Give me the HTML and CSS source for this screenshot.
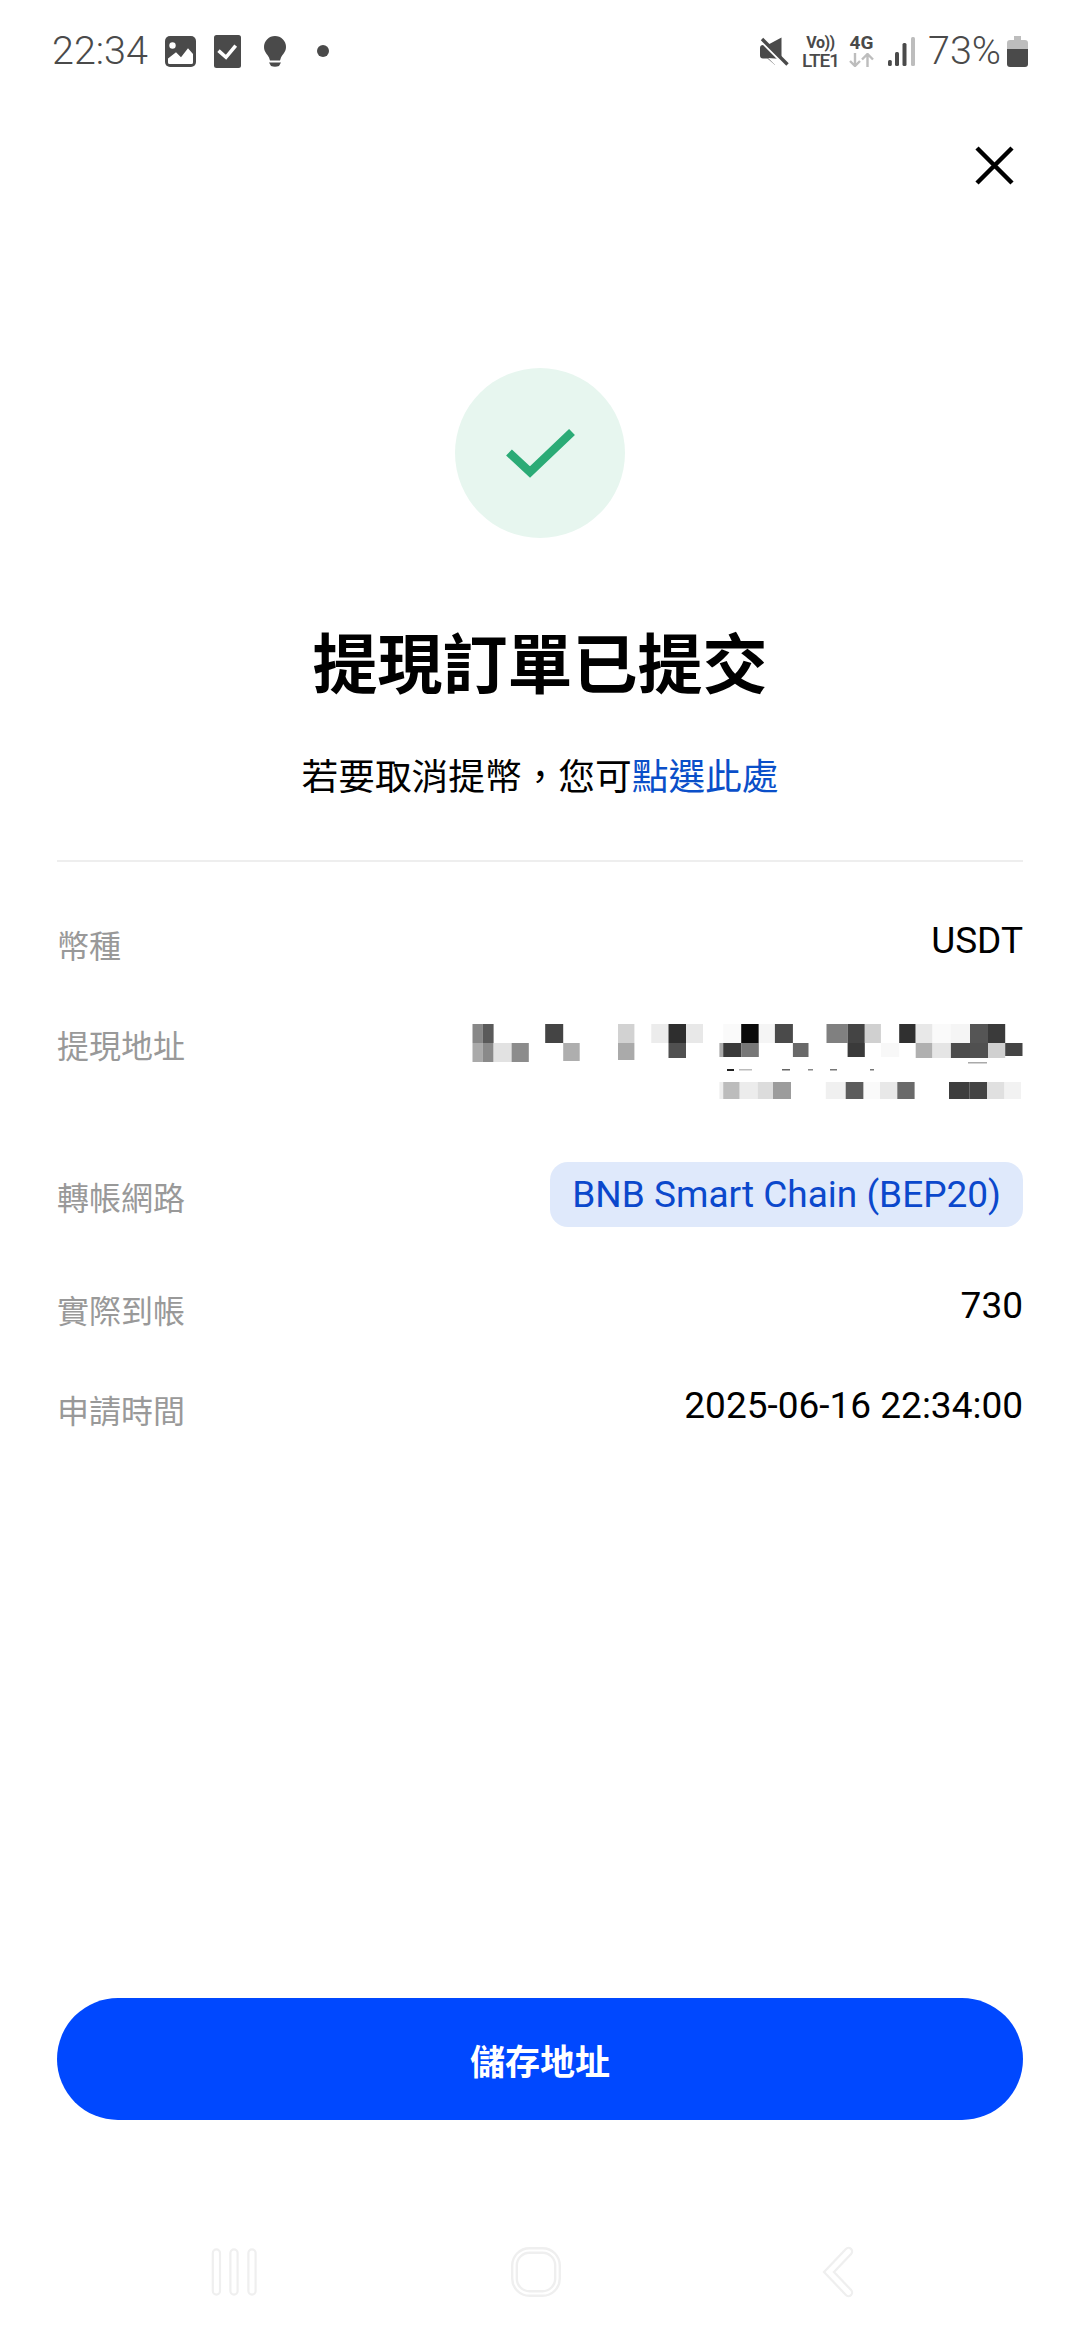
FILE: index.html
```html
<!DOCTYPE html>
<html lang="zh-Hant">
<head>
<meta charset="utf-8">
<title>提現訂單已提交</title>
<link rel="stylesheet" href="styles.css">
</head>
<body>
<main class="screen">
  <header class="status">
    <div class="status-left">
      <span class="clock">22:34</span>
      <svg class="ic-image" width="31" height="31" viewBox="0 0 31 31"><rect width="31" height="31" rx="5" fill="#4a4a4a"/><circle cx="7.5" cy="9.5" r="3.2" fill="#fff"/><path d="M3 22.5 11 16.3 16 21.3 23 12.3 28 18V26.5Q28 28 26.5 28H4.5Q3 28 3 26.5Z" fill="#fff"/></svg>
      <svg class="ic-check" width="27" height="33" viewBox="0 0 27 33"><rect width="27" height="33" rx="2.5" fill="#4a4a4a"/><path d="M4.5 15.7 12 22.3 21.7 10.7" fill="none" stroke="#fff" stroke-width="3.6"/></svg>
      <svg class="ic-bulb" width="22" height="31" viewBox="0 0 22 31"><path d="M11 0A11 11 0 0 1 22 11C22 16 18.800 18 17 21.500L16 24.500H6L5 21.500C3.200 18 0 16 0 11A11 11 0 0 1 11 0Z" fill="#4a4a4a"/><path d="M5 26.500H17L15 30Q11 31.500 7 30Z" fill="#4a4a4a"/></svg>
      <span class="dot"></span>
    </div>
    <div class="status-right">
      <svg class="ic-mute" width="29" height="29" viewBox="0 0 29 29"><path d="M0 11Q0 8 3 8H7.500L21.500 0.500V22L15 28 7.500 21.500H3Q0 21.500 0 18.500Z" fill="#4a4a4a"/><path d="M0.500 3.800 23 26.300" stroke="#fff" stroke-width="2.500"/><path d="M21.500 22V28H15L8 21Z" fill="#fff"/><path d="M2 2 27.500 27.500" stroke="#4a4a4a" stroke-width="3.400"/></svg>
      <div class="volte"><span class="vo">Vo))</span><span class="lte">LTE1</span></div>
      <div class="net">
        <span class="fourg">4G</span>
        <svg width="25" height="14" viewBox="0 0 25 14"><path d="M6 0V13M1 8 6 13 11 8M18.500 14V1M13 6.500 18.500 1 24 6.500" fill="none" stroke="#bdbdbd" stroke-width="2.400"/></svg>
      </div>
      <svg class="ic-signal" width="27" height="29" viewBox="0 0 27 29"><rect y="23" width="3.800" height="6" rx="1.500" fill="#4a4a4a"/><rect x="7" y="15" width="4" height="14" rx="1.500" fill="#4a4a4a"/><rect x="14.500" y="6" width="4" height="23" rx="1.500" fill="#4a4a4a"/><rect x="23" width="4" height="29" rx="1.500" fill="#bdbdbd"/></svg>
      <span class="pct">73%</span>
      <svg class="ic-batt" width="21" height="31" viewBox="0 0 21 31"><path d="M7 0H14V4H18Q21 4 21 7V13H0V7Q0 4 3 4H7Z" fill="#bdbdbd"/><path d="M0 13H21V28Q21 31 18 31H3Q0 31 0 28Z" fill="#4a4a4a"/></svg>
    </div>
  </header>

  <div class="close-row">
    <svg width="41" height="41" viewBox="0 0 41 41"><path d="M3 3 38 38M38 3 3 38" fill="none" stroke="#000" stroke-width="4.500"/></svg>
  </div>

  <div class="success">
    <svg width="71" height="50" viewBox="0 0 71 50"><path d="M4 24.500 25 44 67 4" fill="none" stroke="#2bab76" stroke-width="8.500"/></svg>
  </div>

  <h1 class="title">提現訂單已提交</h1>
  <p class="sub">若要取消提幣&#xFF0C;您可<a class="link">點選此處</a></p>
  <hr class="rule">

  <section class="rows">
    <div class="row"><span class="label">幣種</span><span class="value">USDT</span></div>
    <div class="row row-addr"><span class="label">提現地址</span>
      <svg class="mosaic" width="553" height="75" viewBox="0 0 553 75">
        <g>
          <rect x="2.500" y="0" width="10.400" height="19" fill="#888"/><rect x="12.900" y="0" width="10.700" height="19" fill="#5a5a5a"/><rect x="75.200" y="0" width="18" height="19" fill="#444"/><rect x="148" y="0" width="16.400" height="19" fill="#d2d2d2"/><rect x="181.300" y="0" width="17.200" height="19" fill="#ececec"/><rect x="198.500" y="0" width="17.500" height="19" fill="#2e2e2e"/><rect x="216" y="0" width="17" height="19" fill="#e8e8e8"/><rect x="253.200" y="0" width="18" height="19" fill="#fafafa"/><rect x="271.200" y="0" width="17.600" height="19" fill="#0a0a0a"/><rect x="288.800" y="0" width="16.100" height="19" fill="#f5f5f5"/><rect x="304.900" y="0" width="18" height="19" fill="#4a4a4a"/><rect x="356.500" y="0" width="21.100" height="19" fill="#808080"/><rect x="377.600" y="0" width="17.200" height="19" fill="#444"/><rect x="394.800" y="0" width="16.100" height="19" fill="#d0d0d0"/><rect x="429.200" y="0" width="16.500" height="19" fill="#303030"/><rect x="445.700" y="0" width="16.800" height="19" fill="#e8e8e8"/><rect x="462.500" y="0" width="18.400" height="19" fill="#fafafa"/><rect x="480.900" y="0" width="19.100" height="19" fill="#f5f5f5"/><rect x="500" y="0" width="18" height="19" fill="#555"/><rect x="518" y="0" width="17.200" height="19" fill="#3a3a3a"/>
        </g>
        <g>
          <rect x="2.500" y="19" width="10.400" height="19" fill="#aaa"/><rect x="12.900" y="19" width="10.700" height="19" fill="#8a8a8a"/><rect x="23.600" y="19" width="18" height="19" fill="#e2e2e2"/><rect x="41.600" y="19" width="17.200" height="19" fill="#8c8c8c"/><rect x="93.200" y="19" width="16.500" height="18" fill="#aeaeae"/><rect x="148" y="19" width="16.400" height="17" fill="#aaa"/><rect x="198.500" y="19" width="17.500" height="15" fill="#505050"/><rect x="249.400" y="19" width="3.800" height="14" fill="#aaa"/><rect x="253.200" y="19" width="18" height="14" fill="#3a3a3a"/><rect x="271.200" y="19" width="17.600" height="14" fill="#777"/><rect x="322.900" y="19" width="15.600" height="14" fill="#696969"/><rect x="377.600" y="19" width="17.200" height="14" fill="#3a3a3a"/><rect x="410.900" y="19" width="18.300" height="14" fill="#f8f8f8"/><rect x="445.700" y="19" width="16.800" height="15" fill="#b0b0b0"/><rect x="462.500" y="19" width="18.400" height="15" fill="#e5e5e5"/><rect x="480.900" y="19" width="19.100" height="15" fill="#4c4c4c"/><rect x="500" y="19" width="18" height="15" fill="#505050"/><rect x="518" y="19" width="17.200" height="15" fill="#d0d0d0"/><rect x="535.200" y="19" width="17.300" height="13" fill="#444"/>
        </g>
        <g>
          <rect x="257" y="45" width="7" height="2" fill="#222"/><rect x="269" y="45" width="13" height="1.500" fill="#bbb"/><rect x="312" y="45" width="8" height="1.500" fill="#666"/><rect x="338" y="45" width="5" height="1.500" fill="#888"/><rect x="360" y="45" width="7" height="1.500" fill="#777"/><rect x="400" y="45" width="4" height="1.500" fill="#777"/><rect x="498" y="38" width="19" height="1.500" fill="#aaa"/>
        </g>
        <g>
          <rect x="249.400" y="58" width="3.800" height="17" fill="#eee"/><rect x="253.200" y="58" width="16.500" height="17" fill="#bcbcbc"/><rect x="269.700" y="58" width="17.900" height="17" fill="#ececec"/><rect x="287.600" y="58" width="15.400" height="17" fill="#dcdcdc"/><rect x="303" y="58" width="18" height="17" fill="#9c9c9c"/><rect x="355.800" y="58" width="19.900" height="17" fill="#f0f0f0"/><rect x="375.700" y="58" width="17.900" height="17" fill="#5c5c5c"/><rect x="393.600" y="58" width="16.400" height="17" fill="#fafafa"/><rect x="410" y="58" width="17.300" height="17" fill="#e8e8e8"/><rect x="427.300" y="58" width="17.300" height="17" fill="#6a6a6a"/><rect x="479" y="58" width="20.300" height="17" fill="#3e3e3e"/><rect x="499.300" y="58" width="17.900" height="17" fill="#444"/><rect x="517.200" y="58" width="17.300" height="17" fill="#e0e0e0"/><rect x="534.500" y="58" width="16.500" height="17" fill="#f2f2f2"/>
        </g>
      </svg>
    </div>
    <div class="row row-net"><span class="label">轉帳網路</span><span class="pill">BNB Smart Chain (BEP20)</span></div>
    <div class="row row-amount"><span class="label">實際到帳</span><span class="value">730</span></div>
    <div class="row"><span class="label">申請時間</span><span class="value">2025-06-16 22:34:00</span></div>
  </section>

  <button class="cta">儲存地址</button>

  <nav class="nav">
    <svg width="60" height="60" viewBox="0 0 60 60"><g fill="none" stroke-linecap="round"><path d="M12.400 11V49M30 11V49M48 11V49" stroke="#efefef" stroke-width="9.400"/><path d="M12.400 11V49M30 11V49M48 11V49" stroke="#fff" stroke-width="5"/></g></svg>
    <svg width="60" height="60" viewBox="0 0 60 60"><rect x="8.500" y="8.500" width="43" height="43" rx="15" fill="none" stroke="#efefef" stroke-width="7"/><rect x="8.500" y="8.500" width="43" height="43" rx="15" fill="none" stroke="#fff" stroke-width="2.200"/></svg>
    <svg width="60" height="60" viewBox="0 0 60 60"><g fill="none" stroke-linecap="round"><path d="M40.500 9.500 21 30 40.500 50.500" stroke="#efefef" stroke-width="9.400"/><path d="M40.500 9.500 21 30 40.500 50.500" stroke="#fff" stroke-width="5"/></g></svg>
  </nav>
</main>
</body>
</html>
```

FILE: styles.css
```css
* { box-sizing: border-box; }
html, body { margin: 0; padding: 0; background: #fff; }
body { font-family: Roboto, "Noto Sans CJK TC", sans-serif; color: #000; }

.screen {
  width: 1080px;
  height: 2340px;
  display: flex;
  flex-direction: column;
  overflow: hidden;
}

/* status bar */
.status {
  height: 102px;
  flex: none;
  display: flex;
  justify-content: space-between;
  align-items: center;
  padding: 0 52px 0 52px;
  color: #4a4a4a;
}
.status-left, .status-right { display: flex; align-items: center; }
.clock, .pct { font-size: 39.500px; font-weight: 350; line-height: 46px; color: #4a4a4a; }
.ic-image { margin-left: 17px; }
.ic-check { margin-left: 18px; }
.ic-bulb { margin-left: 23px; }
.dot { width: 12px; height: 12px; margin-left: 31px; border-radius: 50%; background: #4a4a4a; }
.ic-mute { flex: none; }
.volte {
  width: 37px;
  margin-left: 13px;
  padding-top: 3px;
  display: flex;
  flex-direction: column;
  align-items: center;
  color: #4a4a4a;
}
.vo { font-size: 16px; line-height: 16px; font-weight: 700; letter-spacing: -0.5px; }
.lte { font-size: 19px; line-height: 20px; font-weight: 500; letter-spacing: -1px; }
.net { width: 25px; margin-left: 10px; display: flex; flex-direction: column; align-items: center; gap: 2px; }
.fourg { font-size: 19px; line-height: 16px; font-weight: 700; }
.ic-signal { margin-left: 14px; }
.pct { margin-left: 13px; }
.ic-batt { margin-left: 6px; }

/* close */
.close-row { display: flex; justify-content: flex-end; padding: 43px 65px 0 0; flex: none; }
.close-row svg { display: block; }

/* hero */
.success {
  width: 170px;
  height: 170px;
  margin: 182px auto 0;
  flex: none;
  border-radius: 50%;
  background: #e7f6ef;
  display: flex;
  align-items: center;
  justify-content: center;
}
.title {
  margin: 76px 0 0;
  text-align: center;
  font-family: "Noto Sans CJK TC", sans-serif;
  font-size: 65px;
  line-height: 92px;
  font-weight: 700;
}
.sub {
  margin: 43px 0 0;
  text-align: center;
  font-family: "Noto Sans CJK TC", sans-serif;
  font-size: 36.700px;
  line-height: 50px;
}
.link { color: #0a4fc9; }
.rule { margin: 61px 57px 0; height: 2px; border: 0; background: #eeeeee; flex: none; }

/* rows */
.rows { margin-top: 54px; padding: 0 57px; display: flex; flex-direction: column; gap: 47px; }
.row { display: flex; justify-content: space-between; align-items: center; }
.label {
  font-family: "Noto Sans CJK TC", sans-serif;
  font-size: 32px;
  line-height: 50px;
  padding-top: 3px;
  color: #999;
}
.value { font-size: 37px; line-height: 50px; padding-bottom: 3px; }
.row-addr { align-items: flex-start; }
.mosaic { display: block; margin-top: 8px; }
.row-net { margin-top: 16px; }
.row-amount { margin-top: 7px; }
.pill {
  height: 65px;
  padding: 0 22px;
  display: flex;
  align-items: center;
  border-radius: 18px;
  background: #dfe9fb;
  color: #0b48cc;
  font-size: 37px;
}

/* button */
.cta {
  margin: auto 57px 0;
  height: 122px;
  flex: none;
  border: 0;
  border-radius: 61px;
  background: #0048ff;
  color: #fff;
  font-family: "Noto Sans CJK TC", sans-serif;
  font-size: 35px;
  font-weight: 700;
}

/* nav bar */
.nav { display: flex; gap: 242px; padding: 122px 0 38px 204px; flex: none; }
.nav svg { display: block; }
```
